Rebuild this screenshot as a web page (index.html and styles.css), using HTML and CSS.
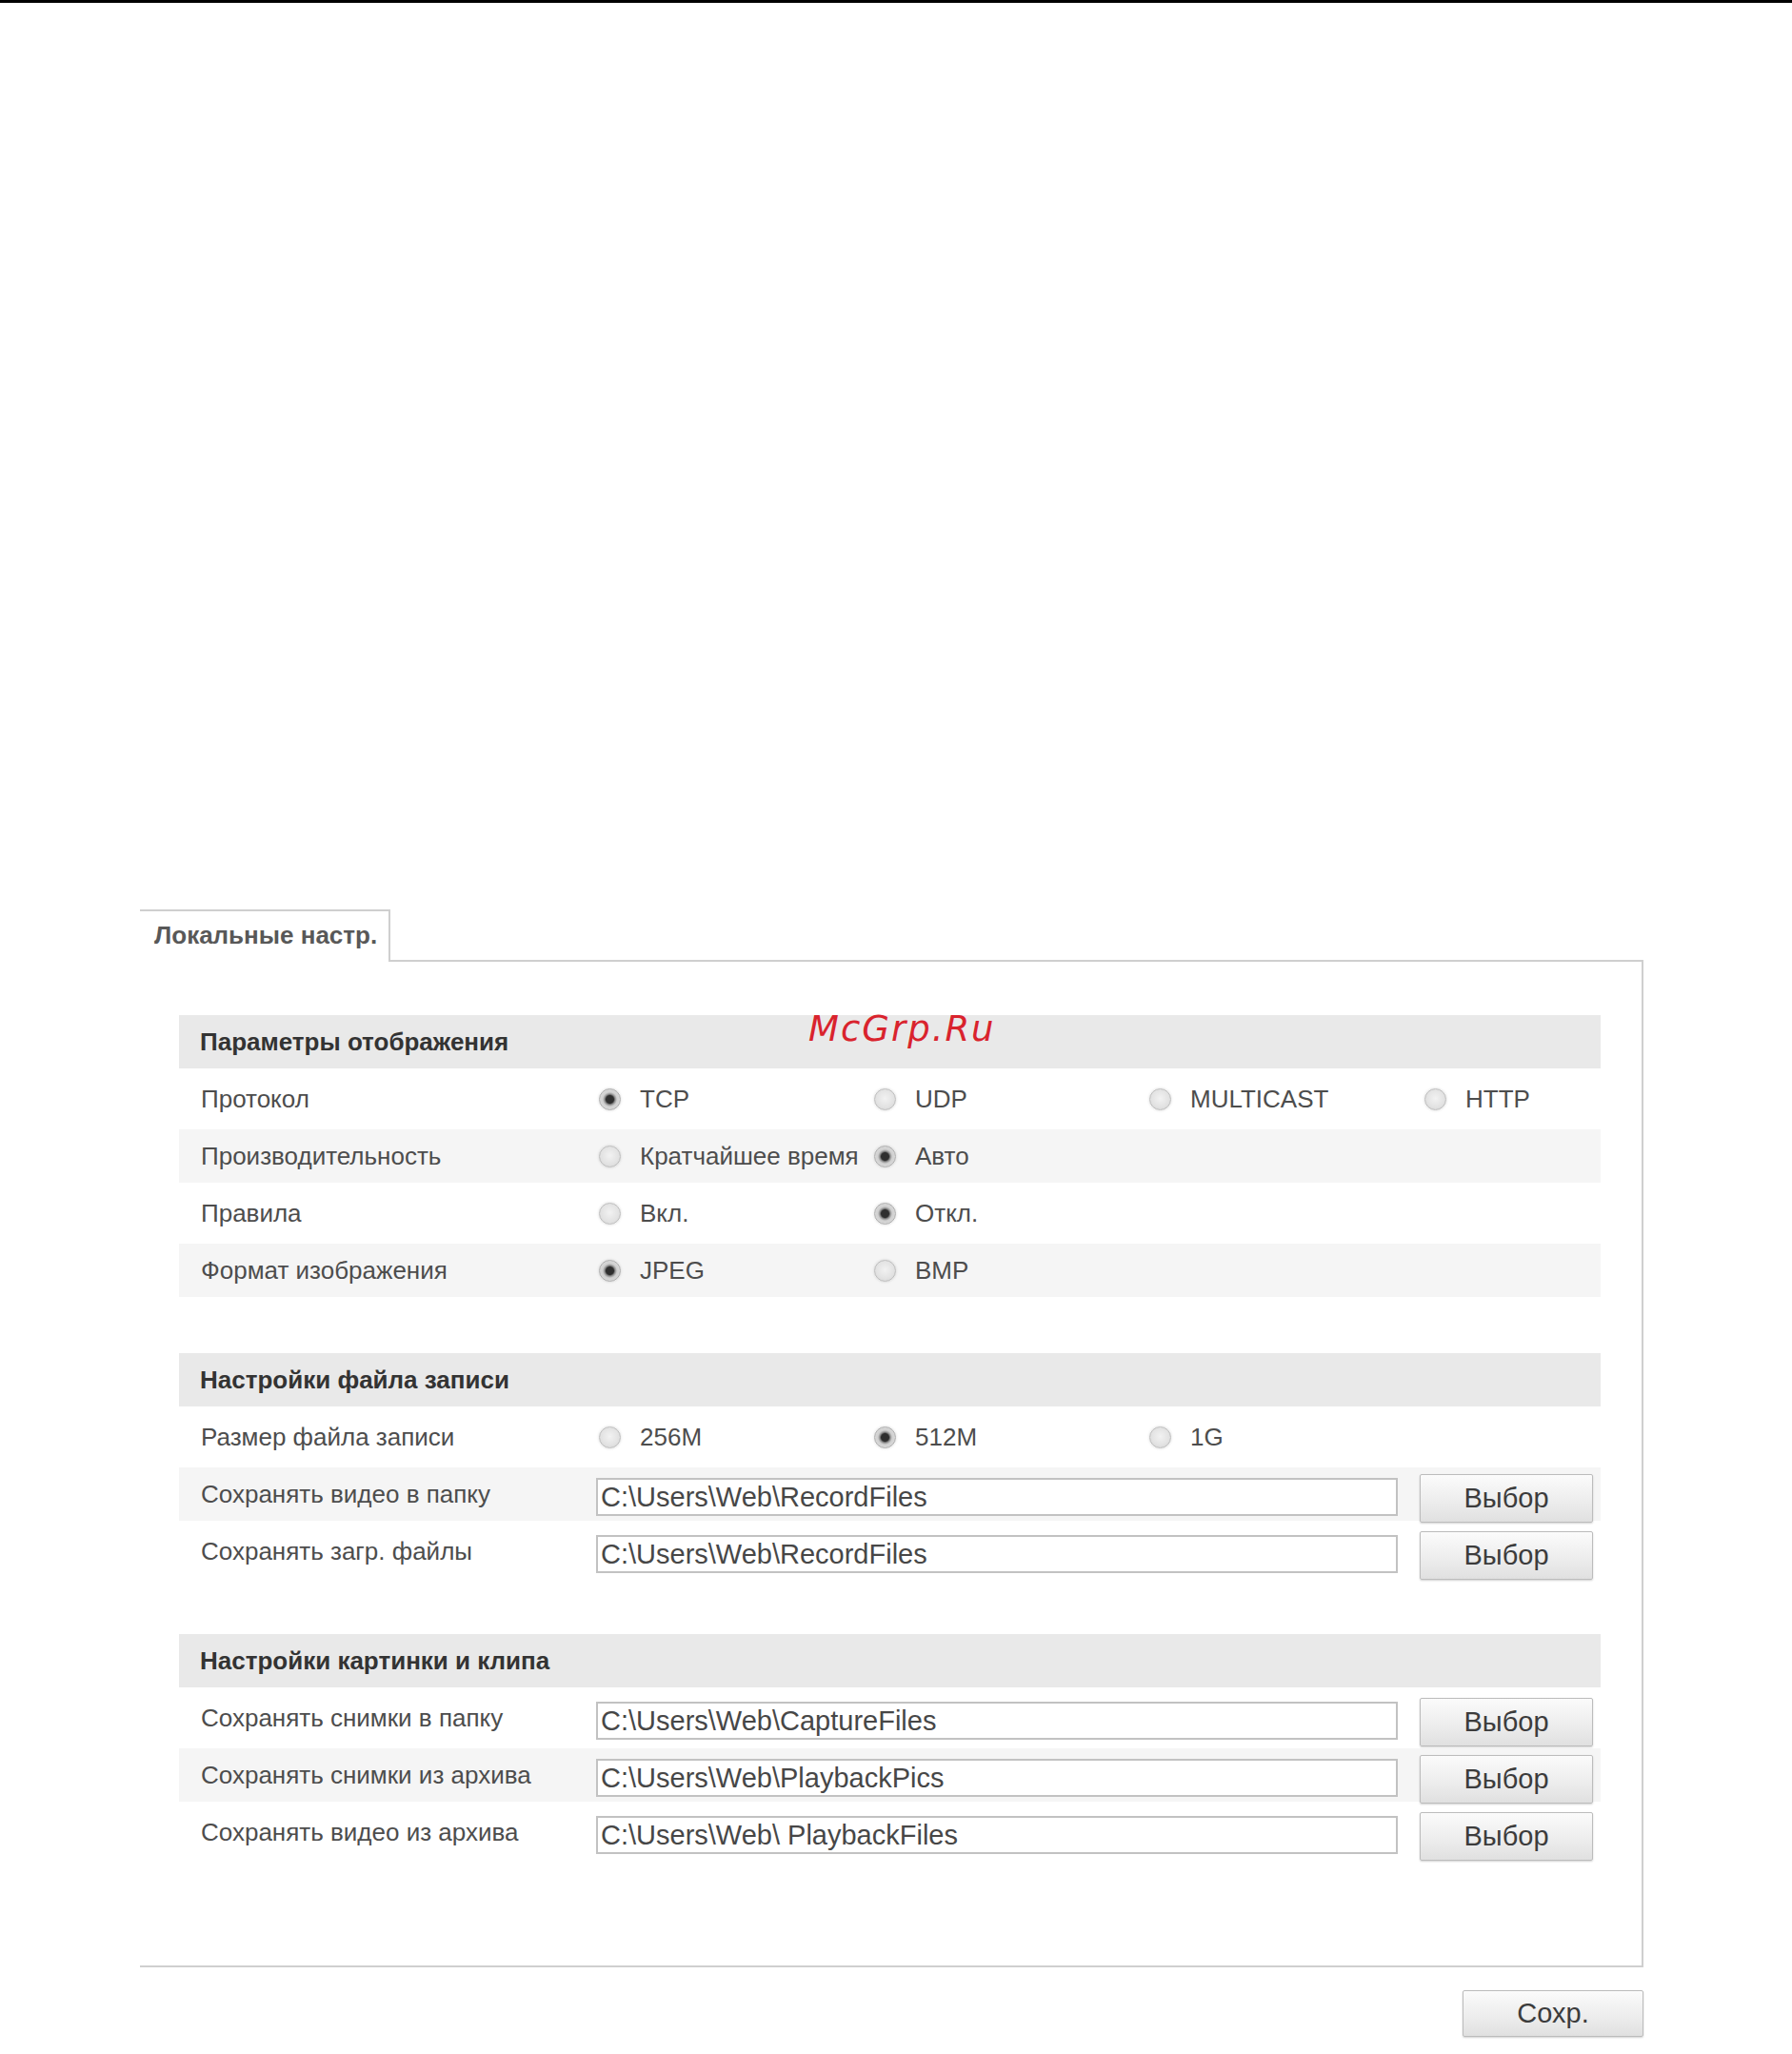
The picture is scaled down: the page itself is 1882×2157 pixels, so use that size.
FILE: index.html
```html
<!DOCTYPE html>
<html lang="ru">
<head>
<meta charset="utf-8">
<title>Локальные настр.</title>
<link rel="stylesheet" href="styles.css">
</head>
<body>
<div class="topbar"></div>
<div class="watermark">McGrp.Ru</div>
<div class="page">
  <div class="tabs">
    <div class="tab">Локальные настр.</div>
    <div class="tab-fill"></div>
  </div>
  <div class="panel">
    <section class="group">
      <div class="group-head">Параметры отображения</div>
      <div class="row">
        <div class="label">Протокол</div>
        <div class="opts">
          <div class="opt"><span class="radio on"></span><span>TCP</span></div>
          <div class="opt"><span class="radio"></span><span>UDP</span></div>
          <div class="opt"><span class="radio"></span><span>MULTICAST</span></div>
          <div class="opt"><span class="radio"></span><span>HTTP</span></div>
        </div>
      </div>
      <div class="row alt">
        <div class="label">Производительность</div>
        <div class="opts">
          <div class="opt"><span class="radio"></span><span>Кратчайшее время</span></div>
          <div class="opt"><span class="radio on"></span><span>Авто</span></div>
        </div>
      </div>
      <div class="row">
        <div class="label">Правила</div>
        <div class="opts">
          <div class="opt"><span class="radio"></span><span>Вкл.</span></div>
          <div class="opt"><span class="radio on"></span><span>Откл.</span></div>
        </div>
      </div>
      <div class="row alt">
        <div class="label">Формат изображения</div>
        <div class="opts">
          <div class="opt"><span class="radio on"></span><span>JPEG</span></div>
          <div class="opt"><span class="radio"></span><span>BMP</span></div>
        </div>
      </div>
    </section>

    <section class="group">
      <div class="group-head">Настройки файла записи</div>
      <div class="row">
        <div class="label">Размер файла записи</div>
        <div class="opts">
          <div class="opt"><span class="radio"></span><span>256M</span></div>
          <div class="opt"><span class="radio on"></span><span>512M</span></div>
          <div class="opt"><span class="radio"></span><span>1G</span></div>
        </div>
      </div>
      <div class="row alt">
        <div class="label">Сохранять видео в папку</div>
        <div class="field">C:\Users\Web\RecordFiles</div>
        <div class="btn">Выбор</div>
      </div>
      <div class="row">
        <div class="label">Сохранять загр. файлы</div>
        <div class="field">C:\Users\Web\RecordFiles</div>
        <div class="btn">Выбор</div>
      </div>
    </section>

    <section class="group">
      <div class="group-head">Настройки картинки и клипа</div>
      <div class="row">
        <div class="label">Сохранять снимки в папку</div>
        <div class="field">C:\Users\Web\CaptureFiles</div>
        <div class="btn">Выбор</div>
      </div>
      <div class="row alt">
        <div class="label">Сохранять снимки из архива</div>
        <div class="field">C:\Users\Web\PlaybackPics</div>
        <div class="btn">Выбор</div>
      </div>
      <div class="row">
        <div class="label">Сохранять видео из архива</div>
        <div class="field">C:\Users\Web\ PlaybackFiles</div>
        <div class="btn">Выбор</div>
      </div>
    </section>
  </div>
  <div class="footer">
    <div class="btn save">Сохр.</div>
  </div>
</div>
</body>
</html>
```

FILE: styles.css
```css
html, body {
  margin: 0;
  padding: 0;
  background: #ffffff;
}

body {
  font-family: "Liberation Sans", Arial, sans-serif;
  color: #4d4d4d;
  position: relative;
  min-height: 2157px;
}

.topbar {
  height: 3px;
  background: #000000;
}

.watermark {
  position: absolute;
  left: 849px;
  top: 1062px;
  font-family: "DejaVu Sans", sans-serif;
  font-style: italic;
  font-size: 37px;
  line-height: 1;
  letter-spacing: 2px;
  color: #d9232d;
  z-index: 2;
}

.page {
  margin: 952px 0 0 147px;
  width: 1579px;
}

.tabs {
  display: flex;
  height: 55px;
}

.tab {
  width: 263px;
  box-sizing: border-box;
  border-top: 2px solid #cfcfcf;
  border-right: 2px solid #cfcfcf;
  background: #ffffff;
  font-weight: bold;
  font-size: 26px;
  color: #585858;
  display: flex;
  align-items: center;
  padding-left: 15px;
  padding-bottom: 2px;
}

.tab-fill {
  flex: 1;
  border-bottom: 2px solid #cfcfcf;
}

.panel {
  box-sizing: border-box;
  border-right: 2px solid #cfcfcf;
  border-bottom: 2px solid #cfcfcf;
  padding: 56px 43px 112px 41px;
}

.group + .group {
  margin-top: 59px;
}

.group-head {
  height: 56px;
  background: #e9e9e9;
  display: flex;
  align-items: center;
  padding-left: 22px;
  font-weight: bold;
  font-size: 26px;
  color: #333333;
}

.row {
  display: flex;
  align-items: center;
  height: 56px;
  margin-top: 4px;
  font-size: 26px;
}

.row.alt {
  background: #f5f5f5;
}

.label {
  width: 438px;
  box-sizing: border-box;
  padding-left: 23px;
  flex: none;
}

.opts {
  display: flex;
}

.opt {
  width: 289px;
  display: flex;
  align-items: center;
}

.radio {
  flex: none;
  width: 23px;
  height: 23px;
  margin-left: 3px;
  margin-right: 20px;
  box-sizing: border-box;
  border-radius: 50%;
  border: 1px solid #bdbdbd;
  background: radial-gradient(circle at 50% 45%, #f2f2f2 0%, #e2e2e2 60%, #cfcfcf 100%);
  box-shadow: 0 0 3px rgba(0, 0, 0, 0.15);
}

.radio.on {
  border-color: #adadad;
  background: radial-gradient(circle, #2f2f2f 0, #2f2f2f 4px, #8f8f8f 5.5px, #d0d0d0 7.5px, #e4e4e4 100%);
}

.field {
  width: 842px;
  height: 40px;
  margin-top: 5px;
  box-sizing: border-box;
  border: 2px solid #c2c2c2;
  background: #ffffff;
  display: flex;
  align-items: center;
  padding-left: 3px;
  padding-top: 2px;
  font-size: 29px;
  color: #474747;
  white-space: pre;
  flex: none;
}

.btn {
  width: 182px;
  height: 51px;
  box-sizing: border-box;
  margin-left: 23px;
  margin-top: 8px;
  border: 1px solid #bcbcbc;
  border-radius: 2px;
  background: linear-gradient(#fbfbfb, #ececec 60%, #e0e0e0);
  box-shadow: 0 1px 2px rgba(0, 0, 0, 0.18);
  display: flex;
  align-items: center;
  justify-content: center;
  font-size: 29px;
  color: #3c3c3c;
  flex: none;
}

.footer {
  display: flex;
  justify-content: flex-end;
  margin-top: 24px;
}

.btn.save {
  width: 190px;
  height: 49px;
  margin-left: 0;
  margin-top: 0;
}
```
